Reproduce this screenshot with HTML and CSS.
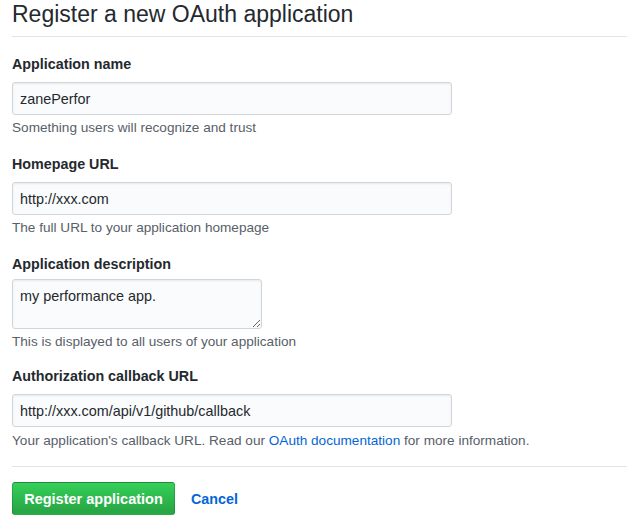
FILE: index.html
```html
<!DOCTYPE html>
<html>
<head>
<meta charset="utf-8">
<link rel="stylesheet" href="styles.css">
</head>
<body>
<div class="page">
  <h2 class="subhead">Register a new OAuth application</h2>
  <form class="form">
    <div class="group">
      <label class="label">Application name</label>
      <input class="input" type="text" value="zanePerfor">
      <p class="note">Something users will recognize and trust</p>
    </div>
    <div class="group">
      <label class="label">Homepage URL</label>
      <input class="input" type="text" value="http://xxx.com">
      <p class="note">The full URL to your application homepage</p>
    </div>
    <div class="group group-tight">
      <label class="label">Application description</label>
      <textarea class="input textarea">my performance app.</textarea>
      <p class="note">This is displayed to all users of your application</p>
    </div>
    <div class="group group-last">
      <label class="label">Authorization callback URL</label>
      <input class="input" type="text" value="http://xxx.com/api/v1/github/callback">
      <p class="note note-low">Your application's callback URL. Read our <a class="link" href="#">OAuth documentation</a> for more information.</p>
    </div>
    <div class="actions">
      <button class="btn" type="button">Register application</button>
      <a class="cancel" href="#">Cancel</a>
    </div>
  </form>
</div>
</body>
</html>
```

FILE: styles.css
```css
* { box-sizing: border-box; }
html, body {
  margin: 0;
  padding: 0;
  background: #fff;
}
body {
  font-family: "Liberation Sans", Arial, sans-serif;
  color: #24292e;
  font-size: 14px;
}
.page {
  padding-left: 12px;
}
.subhead {
  margin: 0;
  font-size: 23px;
  font-weight: 400;
  line-height: 28px;
  padding-bottom: 8px;
  border-bottom: 1px solid #e1e4e8;
  color: #24292e;
}
.form {
  padding-top: 17px;
}
.group {
  display: flex;
  flex-direction: column;
  align-items: flex-start;
  margin-bottom: 17px;
}
.group-tight {
  margin-bottom: 15px;
}
.group-last {
  margin-bottom: 16px;
}
.label {
  font-weight: 700;
  font-size: 14.3px;
  line-height: 20px;
  margin-bottom: 8px;
}
.input {
  width: 440px;
  height: 33px;
  padding: 0 7px;
  font-family: "Liberation Sans", Arial, sans-serif;
  font-size: 14.4px;
  color: #24292e;
  background: #fafbfc;
  border: 1px solid #d1d5da;
  border-radius: 3px;
  box-shadow: inset 0 1px 2px rgba(27,31,35,0.075);
  outline: none;
}
.textarea {
  width: 250px;
  height: 50px;
  padding: 6px 7px;
  line-height: 20px;
  resize: both;
  margin-top: -3px;
}
.note {
  margin: 4px 0 0;
  font-size: 13.6px;
  line-height: 18px;
  color: #586069;
}
.note-low {
  margin-top: 5px;
}
.link {
  color: #0366d6;
  text-decoration: none;
}
.actions {
  border-top: 1px solid #e1e4e8;
  padding-top: 15px;
  display: flex;
  align-items: center;
  gap: 16px;
}
.btn {
  height: 33px;
  width: 163px;
  padding: 0 10px;
  font-family: "Liberation Sans", Arial, sans-serif;
  font-size: 14.5px;
  font-weight: 700;
  color: #fff;
  background: linear-gradient(-180deg, #34d058 0%, #28a745 90%);
  border: 1px solid rgba(27,31,35,0.2);
  border-radius: 3px;
}
.cancel {
  color: #0366d6;
  font-weight: 700;
  text-decoration: none;
  font-size: 14.3px;
}
```
